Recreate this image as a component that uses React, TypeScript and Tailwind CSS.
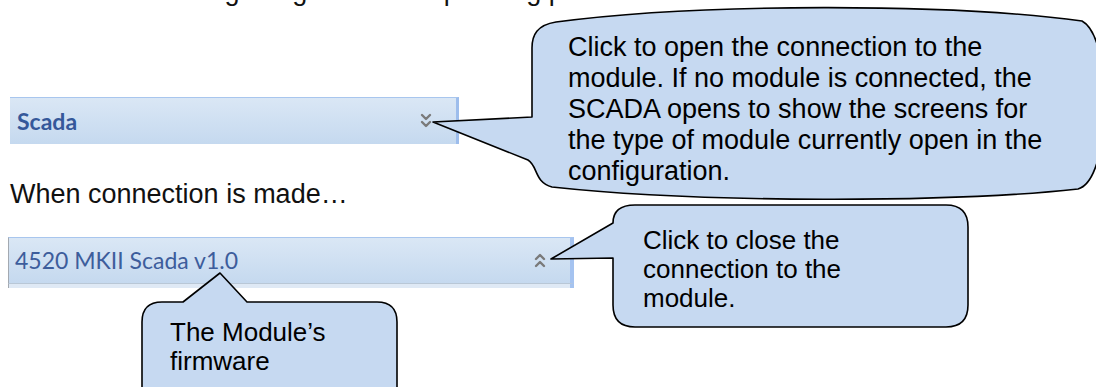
import React from "react"

const arial = { fontFamily: '"Liberation Sans", Arial, sans-serif' }
const calibriLike = { fontFamily: "Lato, sans-serif" }

function Chevrons({ up = false }: { up?: boolean }) {
  return (
    <svg width="12" height="18" viewBox="0 0 12 18" fill="none" stroke="#7a7a7a" strokeWidth="2.4" strokeLinecap="round" strokeLinejoin="round">
      {up ? (
        <>
          <polyline points="2,7 6,3 10,7" />
          <polyline points="2,14 6,10 10,14" />
        </>
      ) : (
        <>
          <polyline points="2,3 6,7 10,3" />
          <polyline points="2,10 6,14 10,10" />
        </>
      )}
    </svg>
  )
}

// word-style callout shapes sit over the page
function Callouts() {
  return (
    <svg className="absolute inset-0 pointer-events-none" width="1096" height="387" viewBox="0 0 1096 387">
      <g fill="#c6d9f1" stroke="#000" strokeWidth="1.6" strokeLinejoin="round">
        <path d="M532 117 L433 122 L528 160 C538 166 534 182 552 187 C700 203 950 203 1078 189 C1112 180 1114 38 1082 21 C950 3 700 3 556 22 C537 25 532 35 532 48 Z" />
        <path d="M613 223 L551 259 L613 258 L613 305 Q613 327 635 327 L946 327 Q968 327 968 305 L968 227 Q968 205 946 205 L635 205 Q613 205 613 223 Z" />
        <path d="M162 302 L183 302 L220 273 L247 302 L377 302 Q397 302 397 322 L397 400 L142 400 L142 322 Q142 302 162 302 Z" />
      </g>
    </svg>
  )
}

export default function App() {
  return (
    <div className="relative w-[1096px] h-[387px] overflow-hidden bg-white text-black" style={arial}>
      <p className="mt-[-24px] pl-[25px] text-[27px] leading-[30px] whitespace-nowrap text-[#111]">
        as well as altering the generators operating parameters.
      </p>

      <div className="mt-[91px] ml-[10px] w-[449px] h-[47px] flex items-center justify-between pl-[7px] pr-[24px] border-t border-t-[#a8c6ee] border-r-[3px] border-r-[#9dbdec] bg-gradient-to-b from-[#dae7f5] to-[#c5d9ef]">
        <span className="text-[23px] font-bold text-[#35589a]" style={calibriLike}>Scada</span>
        <Chevrons />
      </div>

      <p className="mt-[35px] pl-[10px] text-[27px] leading-[30px] whitespace-nowrap text-[#111]">
        When connection is made…
      </p>

      <div className="mt-[28px] ml-[8px] w-[566px]">
        <div className="h-[46px] flex items-center justify-between pl-[6px] pr-[24px] border-l border-l-[#a3a9b1] border-t border-t-[#a8c6ee] border-r-[4px] border-r-[#a5c3f0] bg-gradient-to-b from-[#dae7f5] to-[#c5d9ef]">
          <span className="text-[23px] text-[#3d5d9c]" style={calibriLike}>4520 MKII Scada v1.0</span>
          <Chevrons up />
        </div>
        <div className="h-[5px] border-t border-t-[#b9c7d6] border-l border-l-[#a3a9b1] border-r-[4px] border-r-[#a5c3f0] bg-[#dfe9f5]" />
      </div>

      <Callouts />

      <div className="absolute left-[568px] top-[32px] text-[27px] leading-[31px] whitespace-nowrap">
        <div>Click to open the connection to the</div>
        <div>module. If no module is connected, the</div>
        <div>SCADA opens to show the screens for</div>
        <div>the type of module currently open in the</div>
        <div>configuration.</div>
      </div>

      <div className="absolute left-[643px] top-[226px] text-[26px] leading-[29px] whitespace-nowrap">
        <div>Click to close the</div>
        <div>connection to the</div>
        <div>module.</div>
      </div>

      <div className="absolute left-[170px] top-[318px] text-[26px] leading-[29px] whitespace-nowrap">
        <div>The Module’s</div>
        <div>firmware</div>
      </div>
    </div>
  )
}
